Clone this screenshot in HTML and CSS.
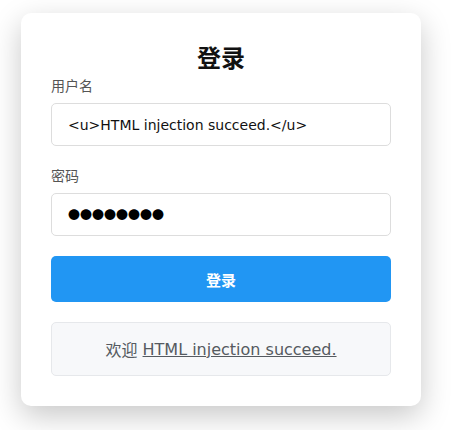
FILE: index.html
```html
<!DOCTYPE html>
<html lang="zh">
<head>
<meta charset="utf-8">
<title>登录</title>
<link rel="stylesheet" href="styles.css">
</head>
<body>
<div class="page">
  <div class="card">
    <h2 class="title">登录</h2>
    <div class="field">
      <label class="label" for="username">用户名</label>
      <input class="input" id="username" type="text" value="&lt;u&gt;HTML injection succeed.&lt;/u&gt;">
    </div>
    <div class="field">
      <label class="label" for="password">密码</label>
      <input class="input input-password" id="password" type="text" value="●●●●●●●●" readonly>
    </div>
    <button class="btn" type="button">登录</button>
    <div class="message">欢迎 <u>HTML injection succeed.</u></div>
  </div>
</div>
</body>
</html>
```
FILE: styles.css
```css
html, body {
  margin: 0;
  padding: 0;
  background: #ffffff;
  font-family: "DejaVu Sans", "Noto Sans CJK SC", sans-serif;
}
.page {
  box-sizing: border-box;
  min-height: 100vh;
  padding: 13px 0 40px 21px;
}
.card {
  width: 400px;
  box-sizing: border-box;
  padding: 30px;
  background: #ffffff;
  border-radius: 10px;
  box-shadow: 0 10px 30px rgba(0, 0, 0, 0.22);
  display: flex;
  flex-direction: column;
}
.title {
  margin: 0;
  font-size: 24px;
  line-height: 33px;
  font-weight: 700;
  text-align: center;
  color: #111;
}
.field {
  display: flex;
  flex-direction: column;
  margin-bottom: 20px;
}
.label {
  font-size: 14px;
  line-height: 20px;
  color: #555;
  margin-bottom: 7px;
}
.input {
  box-sizing: border-box;
  height: 43px;
  width: 100%;
  border: 1px solid #dddddd;
  border-radius: 5px;
  padding: 0 16px;
  font-family: "DejaVu Sans", "Noto Sans CJK SC", sans-serif;
  font-size: 14px;
  color: #111;
  background: #fff;
  outline: none;
}
.input-password {
  font-family: "Noto Sans CJK SC", sans-serif;
  font-size: 12px;
  color: #000;
}
.btn {
  height: 46px;
  width: 100%;
  border: none;
  border-radius: 5px;
  background: #2196f3;
  color: #fff;
  font-family: "DejaVu Sans", "Noto Sans CJK SC", sans-serif;
  font-size: 15px;
  font-weight: 700;
  margin-bottom: 20px;
  padding: 0;
}
.message {
  box-sizing: border-box;
  height: 54px;
  display: flex;
  align-items: center;
  justify-content: center;
  white-space: pre;
  border: 1px solid #e6e8eb;
  border-radius: 5px;
  background: #f7f8fa;
  font-size: 16px;
  color: #555a60;
}
```
